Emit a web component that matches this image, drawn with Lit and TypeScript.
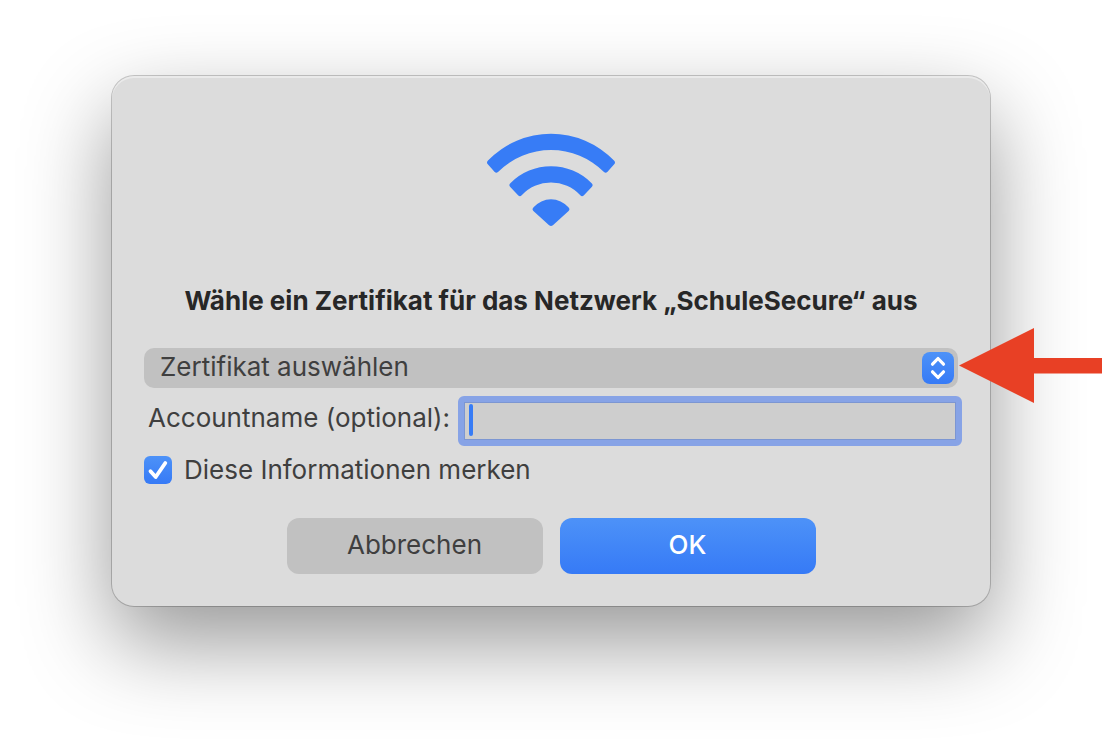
import { LitElement, html, css } from "lit";
import { customElement, state } from "lit/decorators.js";

@customElement("app-root")
export class AppRoot extends LitElement {
  @state() private account = "";
  @state() private remember = true;

  static styles = css`
    :host {
      display: block;
      box-sizing: border-box;
      min-height: 100vh;
      padding: 76px 112px;
      overflow: hidden;
      background: #fff;
      color: #3f3f3f;
      font-family: Inter, "Liberation Sans", sans-serif;
      font-size: 26px;
      line-height: 32px;
    }
    * {
      box-sizing: border-box;
    }
    .dialog {
      display: flex;
      flex-direction: column;
      padding: 57px 32px 32px;
      border-radius: 22px;
      background: #dcdcdc;
      box-shadow:
        inset 0 2px 0 rgba(255, 255, 255, 0.4),
        0 0 0 1px rgba(0, 0, 0, 0.2),
        0 36px 88px rgba(0, 0, 0, 0.41);
    }
    .wifi {
      display: block;
      width: 130px;
      height: 94px;
      align-self: center;
      fill: #377cf6;
    }
    .title {
      margin: 58px 0 31px;
      color: #272727;
      font-size: 26px;
      line-height: 32px;
      font-weight: 700;
      text-align: center;
    }
    .picker {
      position: relative;
      display: flex;
    }
    .select {
      appearance: none;
      width: 100%;
      height: 40px;
      margin: 0;
      padding: 0 44px 2px 16px;
      border: 0;
      border-radius: 10px;
      background: #c1c1c1;
      color: inherit;
      font: inherit;
      outline: none;
    }
    .chevrons {
      position: absolute;
      top: 4px;
      right: 4px;
      width: 32px;
      height: 32px;
      border-radius: 8px;
      background: linear-gradient(#4d92f8, #367af6);
      pointer-events: none;
    }
    .arrow {
      position: absolute;
      top: -20px;
      left: 100%;
      width: 144px;
      height: 76px;
      fill: #e84025;
      pointer-events: none;
    }
    .account {
      display: flex;
      align-items: flex-start;
      gap: 8px;
      margin: 8px -4px 0 4px;
    }
    .label {
      padding-top: 6px;
      white-space: nowrap;
    }
    .field {
      position: relative;
      display: flex;
      flex: 1;
      min-width: 0;
    }
    .input {
      width: 100%;
      height: 50px;
      margin: 0;
      padding: 0 6px;
      border: 6px solid #87a3e6;
      border-radius: 6px;
      background: #cecece;
      box-shadow: inset 0 0 0 1px #7c96d2;
      color: inherit;
      font: inherit;
      outline: none;
      caret-color: transparent;
    }
    .caret {
      position: absolute;
      top: 8px;
      left: 11px;
      width: 4px;
      height: 32px;
      border-radius: 2px;
      background: #377cf6;
      pointer-events: none;
    }
    .remember {
      display: flex;
      align-items: center;
      gap: 12px;
      margin-top: 8px;
    }
    .tick {
      display: grid;
      width: 28px;
      height: 28px;
    }
    .box,
    .mark {
      grid-area: 1 / 1;
      width: 28px;
      height: 28px;
      margin: 0;
    }
    .box {
      appearance: none;
      border-radius: 6px;
      background: #c1c1c1;
    }
    .box:checked {
      background: linear-gradient(#4d92f8, #367af6);
    }
    .mark {
      pointer-events: none;
      visibility: hidden;
    }
    .box:checked + .mark {
      visibility: visible;
    }
    .stroke {
      fill: none;
      stroke: #fff;
      stroke-linecap: round;
      stroke-linejoin: round;
    }
    .actions {
      display: flex;
      justify-content: center;
      gap: 17px;
      margin-top: 32px;
    }
    .button {
      width: 256px;
      height: 56px;
      padding: 0 0 2px;
      border: 0;
      border-radius: 12px;
      background: #c1c1c1;
      color: inherit;
      font: inherit;
    }
    .primary {
      background: linear-gradient(#4d92f8, #367af6);
      color: #fff;
      font-weight: 500;
    }
  `;

  render() {
    return html`
      <form class="dialog" @submit=${(e: Event) => e.preventDefault()}>
        <svg class="wifi" viewBox="0 0 130 94" aria-hidden="true">
          <path
            d="M2 27.5A87.5 87.5 0 0 1 128 27.5Q129.9 29.5 128.2 31.3L121.3 39Q119.7 40.6 118 39A75 75 0 0 0 12 39Q10.3 40.6 8.7 39L1.8 31.3Q.1 29.5 2 27.5Z"
          />
          <path
            d="M24.6 50A57 57 0 0 1 105.4 50Q107.7 52 105.7 54L97.7 62.5Q96 64 94.3 62.3A40 40 0 0 0 35.7 62.3Q34 64 32.3 62.5L24.3 54Q22.3 52 24.6 50Z"
          />
          <path
            d="M47.6 74.3A23 23 0 0 1 82.4 74.3Q84.4 76.2 82.6 78L66.9 92.2Q65 93.8 63.1 92.2L47.4 78Q45.6 76.2 47.6 74.3Z"
          />
        </svg>
        <h1 class="title">Wähle ein Zertifikat für das Netzwerk „SchuleSecure“ aus</h1>
        <div class="picker">
          <select class="select" aria-label="Zertifikat auswählen">
            <option>Zertifikat auswählen</option>
          </select>
          <svg class="chevrons" viewBox="0 0 32 32" aria-hidden="true">
            <path class="stroke" stroke-width="3.2" d="M10.5 12.2L16 6.5L21.5 12.2M10.5 19.8L16 25.5L21.5 19.8" />
          </svg>
          <svg class="arrow" viewBox="0 0 144 76" aria-hidden="true">
            <path d="M1 37.5L76 0V30H144V45.5H76V75Z" />
          </svg>
        </div>
        <div class="account">
          <label class="label" for="account">Accountname (optional):</label>
          <span class="field">
            <input
              class="input"
              id="account"
              type="text"
              .value=${this.account}
              @input=${(e: Event) => (this.account = (e.target as HTMLInputElement).value)}
            />
            ${this.account ? "" : html`<span class="caret"></span>`}
          </span>
        </div>
        <div class="remember">
          <span class="tick">
            <input
              class="box"
              id="remember"
              type="checkbox"
              .checked=${this.remember}
              @change=${(e: Event) => (this.remember = (e.target as HTMLInputElement).checked)}
            />
            <svg class="mark" viewBox="0 0 28 28" aria-hidden="true">
              <path class="stroke" stroke-width="3.8" d="M6.5 15.2L11.7 21L21.3 7" />
            </svg>
          </span>
          <label for="remember">Diese Informationen merken</label>
        </div>
        <div class="actions">
          <button class="button" type="button">Abbrechen</button>
          <button class="button primary" type="submit">OK</button>
        </div>
      </form>
    `;
  }
}
